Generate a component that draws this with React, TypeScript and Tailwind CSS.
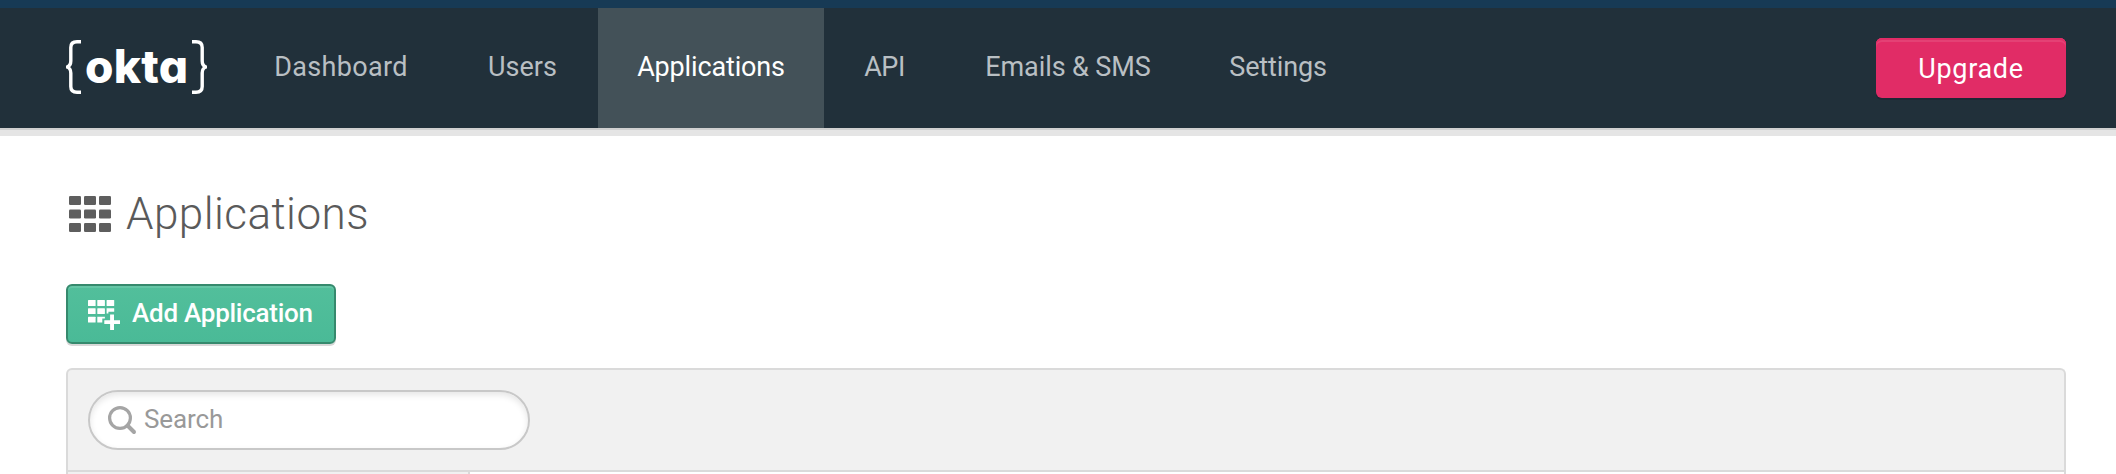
const navItems = [
  { label: "Dashboard", cls: "ml-[26px] w-[216px] tracking-[0.35px] text-[#b9bfc3]" },
  { label: "Users", cls: "w-[149px] pr-[2px] text-[#b9bfc3]" },
  { label: "Applications", cls: "w-[226px] bg-[#435158] tracking-[-0.15px] text-white" },
  { label: "API", cls: "w-[121px] tracking-[-0.5px] text-[#b9bfc3]" },
  { label: "Emails & SMS", cls: "w-[246px] tracking-[-0.1px] text-[#b9bfc3]" },
  { label: "Settings", cls: "w-[174px] tracking-[-0.15px] text-[#b9bfc3]" },
];

function Brace({ className = "" }: { className?: string }) {
  return (
    <svg width="15" height="54" viewBox="0 0 15 54" fill="none" stroke="#fff" strokeWidth="3.4" className={className}>
      <path d="M15 1.8H11C7 1.800 4.800 4 4.800 7.500V21C4.800 24 4 26 1 27C4 28 4.800 30 4.800 33V46.500C4.800 50 7 52.200 11 52.200H15" />
    </svg>
  );
}

function Logo() {
  return (
    <a className="flex w-[141px] shrink-0 items-center pb-[2px]">
      <Brace />
      <span className="w-[111px] pb-[3px] pl-[4px] text-left font-['Inter',sans-serif] text-[46px] leading-[54px] font-extrabold tracking-[0.3px] text-white [font-feature-settings:'cv11']">
        okta
      </span>
      <Brace className="-scale-x-100" />
    </a>
  );
}

function GridIcon() {
  return (
    <svg width="42" height="36" viewBox="0 0 42 36" fill="#5e5e5e">
      {[0, 13.5, 27].map((y) =>
        [0, 15, 30].map((x) => <rect key={`${x}-${y}`} x={x} y={y} width="12" height="9" rx="1.3" />)
      )}
    </svg>
  );
}

function AddGridIcon() {
  return (
    <svg width="32" height="30" viewBox="0 0 32 30" fill="#fff">
      {[0, 9.3, 18.6].map((x) => (
        <rect key={x} x={x} y="0" width="7.6" height="6" rx="0.5" />
      ))}
      <rect x="0" y="8.3" width="7.6" height="5.700" rx="0.5" />
      <rect x="9.3" y="8.3" width="7.6" height="5.700" rx="0.5" />
      <path d="M18.600 8.300H26.200V11.700H20.400V13.600H18.600Z" />
      <rect x="0" y="16.700" width="7.6" height="5.700" rx="0.5" />
      <path d="M9.300 16.700H16.900V18.600H14.300V22.400H9.300Z" />
      <path d="M22.100 14.500H26V20.300H32V24.100H26V30H22.100V24.100H16.300V20.300H22.100Z" />
    </svg>
  );
}

function SearchIcon() {
  return (
    <svg width="29" height="29" viewBox="0 0 29 29" fill="none" stroke="#a5a5a5">
      <circle cx="12" cy="12" r="10.4" strokeWidth="3.2" />
      <path d="M19.500 19.500L26 26" strokeWidth="4" strokeLinecap="round" />
    </svg>
  );
}

export default function App() {
  return (
    <div className="flex h-[474px] w-full flex-col overflow-hidden bg-white font-['Roboto',sans-serif]">
      <div className="h-2 shrink-0 bg-[#173a55]" />
      <header className="flex h-[120px] shrink-0 items-stretch bg-[#21303a] pr-[50px] pl-[66px]">
        <Logo />
        <nav className="flex text-[27px]">
          {navItems.map((item) => (
            <a key={item.label} className={`flex items-center justify-center pb-[2px] whitespace-nowrap ${item.cls}`}>
              {item.label}
            </a>
          ))}
        </nav>
        <button className="ml-auto h-[60px] w-[190px] self-center rounded-md bg-[#e12c66] pt-[2px] text-[27px] tracking-[0.7px] text-white shadow-[0_2px_0_rgba(20,20,40,0.3),inset_0_2px_0_#e12c66,inset_0_4px_0_#e44175]">
          Upgrade
        </button>
      </header>
      <div className="h-2 shrink-0 border-t-2 border-[#d0d0d0] bg-[#e5e5e5]" />

      <main className="flex flex-col pr-[50px] pl-[66px]">
        <h1 className="mt-[49px] flex h-[58px] items-center pl-[3px] text-[44px] leading-[58px] font-light tracking-[0.45px] text-[#5a5a5a]">
          <GridIcon />
          <span className="pl-[15px]">Applications</span>
        </h1>

        <button className="mt-[41px] flex h-[60px] w-[270px] items-center rounded-md border-2 border-[#36896d] bg-linear-to-b from-[#52bf9b] to-[#4aba97] pl-[20px] text-[26px] font-medium tracking-[-0.25px] whitespace-nowrap text-white shadow-[0_2px_0_#d8d8d8,inset_0_2px_0_#65c6a6]">
          <span className="pt-[2px]">
            <AddGridIcon />
          </span>
          <span className="pb-px pl-[12px]">Add Application</span>
        </button>

        <section className="mt-[24px] flex h-[130px] flex-col rounded-t-md border-2 border-b-0 border-[#dadada] bg-[#f1f1f1]">
          <div className="h-[102px] shrink-0 border-b-2 border-[#dadada] pt-[20px] pl-[20px]">
            <label className="flex h-[60px] w-[442px] items-center rounded-full border-2 border-[#c8c8c8] bg-white pl-[18px] text-[26px] tracking-[-0.1px] text-[#999999] shadow-[inset_0_3px_6px_rgba(0,0,0,0.1)]">
              <SearchIcon />
              <span className="pb-[2px] pl-[7px]">Search</span>
            </label>
          </div>
          <div className="flex flex-1">
            <div className="w-[402px] border-r-2 border-[#dadada]" />
            <div className="flex-1 bg-white" />
          </div>
        </section>
      </main>
    </div>
  );
}
